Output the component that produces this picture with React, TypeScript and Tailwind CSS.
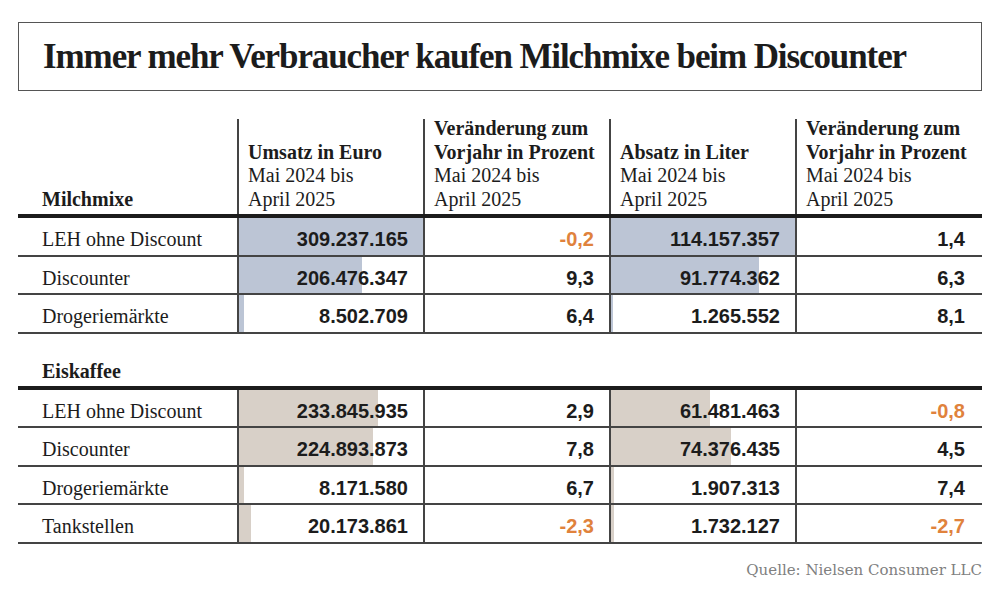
const serif = { fontFamily: '"Liberation Serif", "Times New Roman", serif' };

type Row = {
  label: string;
  umsatz: number;
  umsatzDelta: string;
  absatz: number;
  absatzDelta: string;
};

const milch: Row[] = [
  { label: 'LEH ohne Discount', umsatz: 309237165, umsatzDelta: '-0,2', absatz: 114157357, absatzDelta: '1,4' },
  { label: 'Discounter', umsatz: 206476347, umsatzDelta: '9,3', absatz: 91774362, absatzDelta: '6,3' },
  { label: 'Drogeriemärkte', umsatz: 8502709, umsatzDelta: '6,4', absatz: 1265552, absatzDelta: '8,1' },
];

const eis: Row[] = [
  { label: 'LEH ohne Discount', umsatz: 233845935, umsatzDelta: '2,9', absatz: 61481463, absatzDelta: '-0,8' },
  { label: 'Discounter', umsatz: 224893873, umsatzDelta: '7,8', absatz: 74376435, absatzDelta: '4,5' },
  { label: 'Drogeriemärkte', umsatz: 8171580, umsatzDelta: '6,7', absatz: 1907313, absatzDelta: '7,4' },
  { label: 'Tankstellen', umsatz: 20173861, umsatzDelta: '-2,3', absatz: 1732127, absatzDelta: '-2,7' },
];

const UMSATZ_MAX = 309237165;
const ABSATZ_MAX = 114157357;

const fmt = (n: number) => n.toLocaleString('de-DE');

const grid = 'grid grid-cols-[219px_186px_186px_186px_185px]';

const NumCell = ({ value, bar, barColor }: { value: string; bar?: number; barColor?: string }) => {
  const negative = value.startsWith('-');
  return (
    <div className="relative border-l-2 border-[#444] flex items-center justify-end pr-[15px] pt-[6px]">
      {bar !== undefined && (
        <div className={`absolute left-0 top-0 bottom-0 ${barColor}`} style={{ width: `${bar * 100}%` }} />
      )}
      <span
        className={`relative text-[20px] font-bold ${negative ? 'text-[#e0823c]' : 'text-[#1c1c1c]'}`}
        style={{ fontFamily: '"Liberation Sans", Arial, sans-serif' }}
      >
        {value}
      </span>
    </div>
  );
};

const DataRow = ({ row, barColor }: { row: Row; barColor: string }) => (
  <div className={`${grid} h-[38.5px] border-b-2 border-[#444]`}>
    <div className="flex items-center pl-[24px] pt-[6px] text-[20px] text-[#1c1c1c]" style={serif}>
      {row.label}
    </div>
    <NumCell value={fmt(row.umsatz)} bar={row.umsatz / UMSATZ_MAX} barColor={barColor} />
    <NumCell value={row.umsatzDelta} />
    <NumCell value={fmt(row.absatz)} bar={row.absatz / ABSATZ_MAX} barColor={barColor} />
    <NumCell value={row.absatzDelta} />
  </div>
);

const Head = ({ title }: { title: string[] }) => (
  <div className="relative flex flex-col justify-end pl-[11px] pb-[3px] leading-[23.5px] text-[20px] text-[#1c1c1c] before:absolute before:left-0 before:top-[9px] before:bottom-0 before:w-[2px] before:bg-[#444]">
    {title.map((t) => (
      <div key={t} className="font-bold whitespace-nowrap">
        {t}
      </div>
    ))}
    <div>Mai 2024 bis</div>
    <div>April 2025</div>
  </div>
);

export default function App() {
  return (
    <div className="w-[1000px] h-[599px] bg-white px-[18px] pt-[22px]" style={serif}>
      <div className="h-[69px] border border-[#555] flex items-center pl-[24px]">
        <h1 className="text-[35px] font-bold text-[#1c1c1c] tracking-[-1.1px] whitespace-nowrap pt-[2px]">
          Immer mehr Verbraucher kaufen Milchmixe beim Discounter
        </h1>
      </div>

      <div className="mt-[19px]">
        <div className={`${grid} h-[104px] border-b-4 border-[#1c1c1c] box-content`}>
          <div className="flex items-end pl-[24px] pb-[3px] leading-[23.5px] text-[20px] font-bold text-[#1c1c1c]">
            Milchmixe
          </div>
          <Head title={['Umsatz in Euro']} />
          <Head title={['Veränderung zum', 'Vorjahr in Prozent']} />
          <Head title={['Absatz in Liter']} />
          <Head title={['Veränderung zum', 'Vorjahr in Prozent']} />
        </div>
        {milch.map((r) => (
          <DataRow key={r.label} row={r} barColor="bg-[#bcc5d5]" />
        ))}

        <div className="h-[52px] flex items-end pl-[24px] pb-0 border-b-4 border-[#1c1c1c] box-content text-[20px] font-bold text-[#1c1c1c]">
          Eiskaffee
        </div>
        {eis.map((r) => (
          <DataRow key={r.label} row={r} barColor="bg-[#d8d0c8]" />
        ))}

        <div
          className="mt-[15px] text-right text-[15px] text-[#808080]"
          style={{ fontFamily: '"DejaVu Serif", serif', fontWeight: 300 }}
        >
          Quelle: Nielsen Consumer LLC
        </div>
      </div>
    </div>
  );
}
